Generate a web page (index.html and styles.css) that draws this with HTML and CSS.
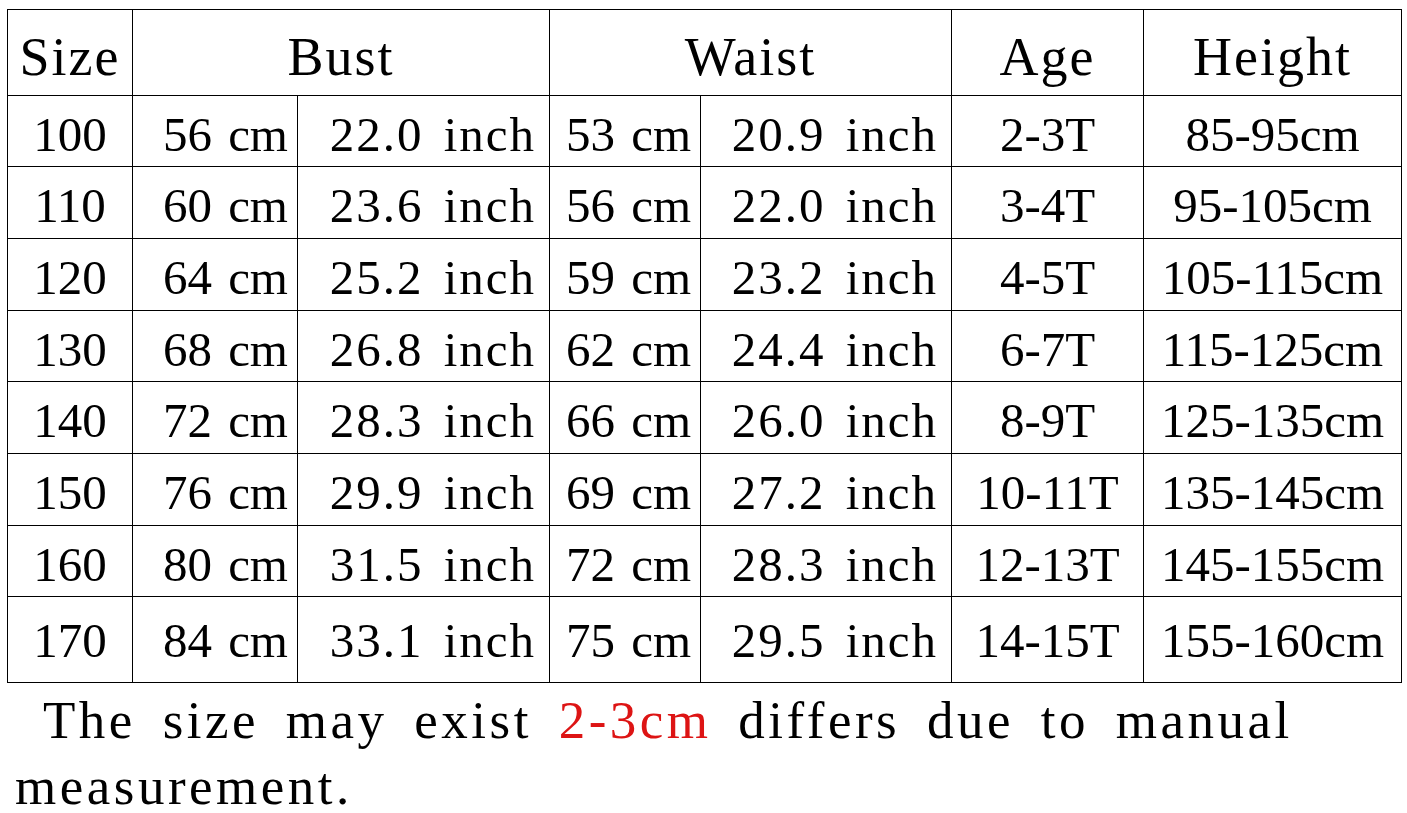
FILE: index.html
```html
<!DOCTYPE html>
<html lang="en">
<head>
<meta charset="utf-8">
<title>Size Chart</title>
<link rel="stylesheet" href="styles.css">
</head>
<body>
<main class="chart">
  <table class="sizes">
    <colgroup>
      <col class="c-size">
      <col class="c-bcm">
      <col class="c-bin">
      <col class="c-wcm">
      <col class="c-win">
      <col class="c-age">
      <col class="c-height">
    </colgroup>
    <thead>
      <tr class="head">
        <th>Size</th>
        <th colspan="2">Bust</th>
        <th colspan="2">Waist</th>
        <th>Age</th>
        <th>Height</th>
      </tr>
    </thead>
    <tbody>
      <tr><td class="size">100</td><td class="cm">56 cm</td><td class="inch">22.0 inch</td><td class="cm">53 cm</td><td class="inch">20.9 inch</td><td class="age">2-3T</td><td class="height">85-95cm</td></tr>
      <tr><td class="size">110</td><td class="cm">60 cm</td><td class="inch">23.6 inch</td><td class="cm">56 cm</td><td class="inch">22.0 inch</td><td class="age">3-4T</td><td class="height">95-105cm</td></tr>
      <tr><td class="size">120</td><td class="cm">64 cm</td><td class="inch">25.2 inch</td><td class="cm">59 cm</td><td class="inch">23.2 inch</td><td class="age">4-5T</td><td class="height">105-115cm</td></tr>
      <tr><td class="size">130</td><td class="cm">68 cm</td><td class="inch">26.8 inch</td><td class="cm">62 cm</td><td class="inch">24.4 inch</td><td class="age">6-7T</td><td class="height">115-125cm</td></tr>
      <tr><td class="size">140</td><td class="cm">72 cm</td><td class="inch">28.3 inch</td><td class="cm">66 cm</td><td class="inch">26.0 inch</td><td class="age">8-9T</td><td class="height">125-135cm</td></tr>
      <tr><td class="size">150</td><td class="cm">76 cm</td><td class="inch">29.9 inch</td><td class="cm">69 cm</td><td class="inch">27.2 inch</td><td class="age">10-11T</td><td class="height">135-145cm</td></tr>
      <tr><td class="size">160</td><td class="cm">80 cm</td><td class="inch">31.5 inch</td><td class="cm">72 cm</td><td class="inch">28.3 inch</td><td class="age">12-13T</td><td class="height">145-155cm</td></tr>
      <tr class="last"><td class="size">170</td><td class="cm">84 cm</td><td class="inch">33.1 inch</td><td class="cm">75 cm</td><td class="inch">29.5 inch</td><td class="age">14-15T</td><td class="height">155-160cm</td></tr>
    </tbody>
  </table>
  <p class="note">The size may exist <span class="warn">2-3cm</span> differs due to manual measurement.</p>
</main>
</body>
</html>
```

FILE: styles.css
```css
html, body {
  margin: 0;
  padding: 0;
  background: #ffffff;
}

body {
  font-family: "Liberation Serif", "Times New Roman", serif;
  color: #000000;
}

.chart {
  padding: 9px 0 0 7px;
}

.sizes {
  border-collapse: collapse;
  table-layout: fixed;
  width: 1395px;
}

.c-size { width: 125px; }
.c-bcm { width: 165px; }
.c-bin { width: 252px; }
.c-wcm { width: 151px; }
.c-win { width: 251px; }
.c-age { width: 192px; }
.c-height { width: 258px; }

.sizes th,
.sizes td {
  border: 1px solid #000000;
  padding: 0;
  white-space: nowrap;
  overflow: hidden;
}

.sizes th {
  height: 86px;
  font-size: 54px;
  font-weight: normal;
  letter-spacing: 2px;
  text-align: center;
  vertical-align: middle;
  padding-top: 8px;
  box-sizing: border-box;
}

.sizes td {
  font-size: 49px;
  text-align: center;
  vertical-align: middle;
  padding-top: 6px;
  box-sizing: border-box;
}

.sizes tbody tr:nth-child(1) td,
.sizes tbody tr:nth-child(4) td,
.sizes tbody tr:nth-child(7) td {
  height: 71px;
}

.sizes tbody tr:nth-child(2) td,
.sizes tbody tr:nth-child(3) td,
.sizes tbody tr:nth-child(5) td,
.sizes tbody tr:nth-child(6) td {
  height: 72px;
}

.sizes tbody tr.last td {
  height: 86px;
  padding-top: 2px;
}

.sizes td.size {
  letter-spacing: 0;
}

.sizes td.cm {
  text-align: right;
  padding-right: 9px;
  letter-spacing: 0;
  word-spacing: 4px;
}

.sizes td.inch {
  text-align: right;
  padding-right: 13px;
  letter-spacing: 2px;
  word-spacing: 6px;
}

.sizes td.age {
  letter-spacing: 0;
}

.sizes td.height {
  letter-spacing: 0;
}

.note {
  margin: 0;
  padding: 4px 0 0 8px;
  font-size: 53px;
  line-height: 66px;
  letter-spacing: 3.5px;
  word-spacing: 10px;
  text-indent: 28px;
}

.warn {
  color: #dd1414;
}
```
